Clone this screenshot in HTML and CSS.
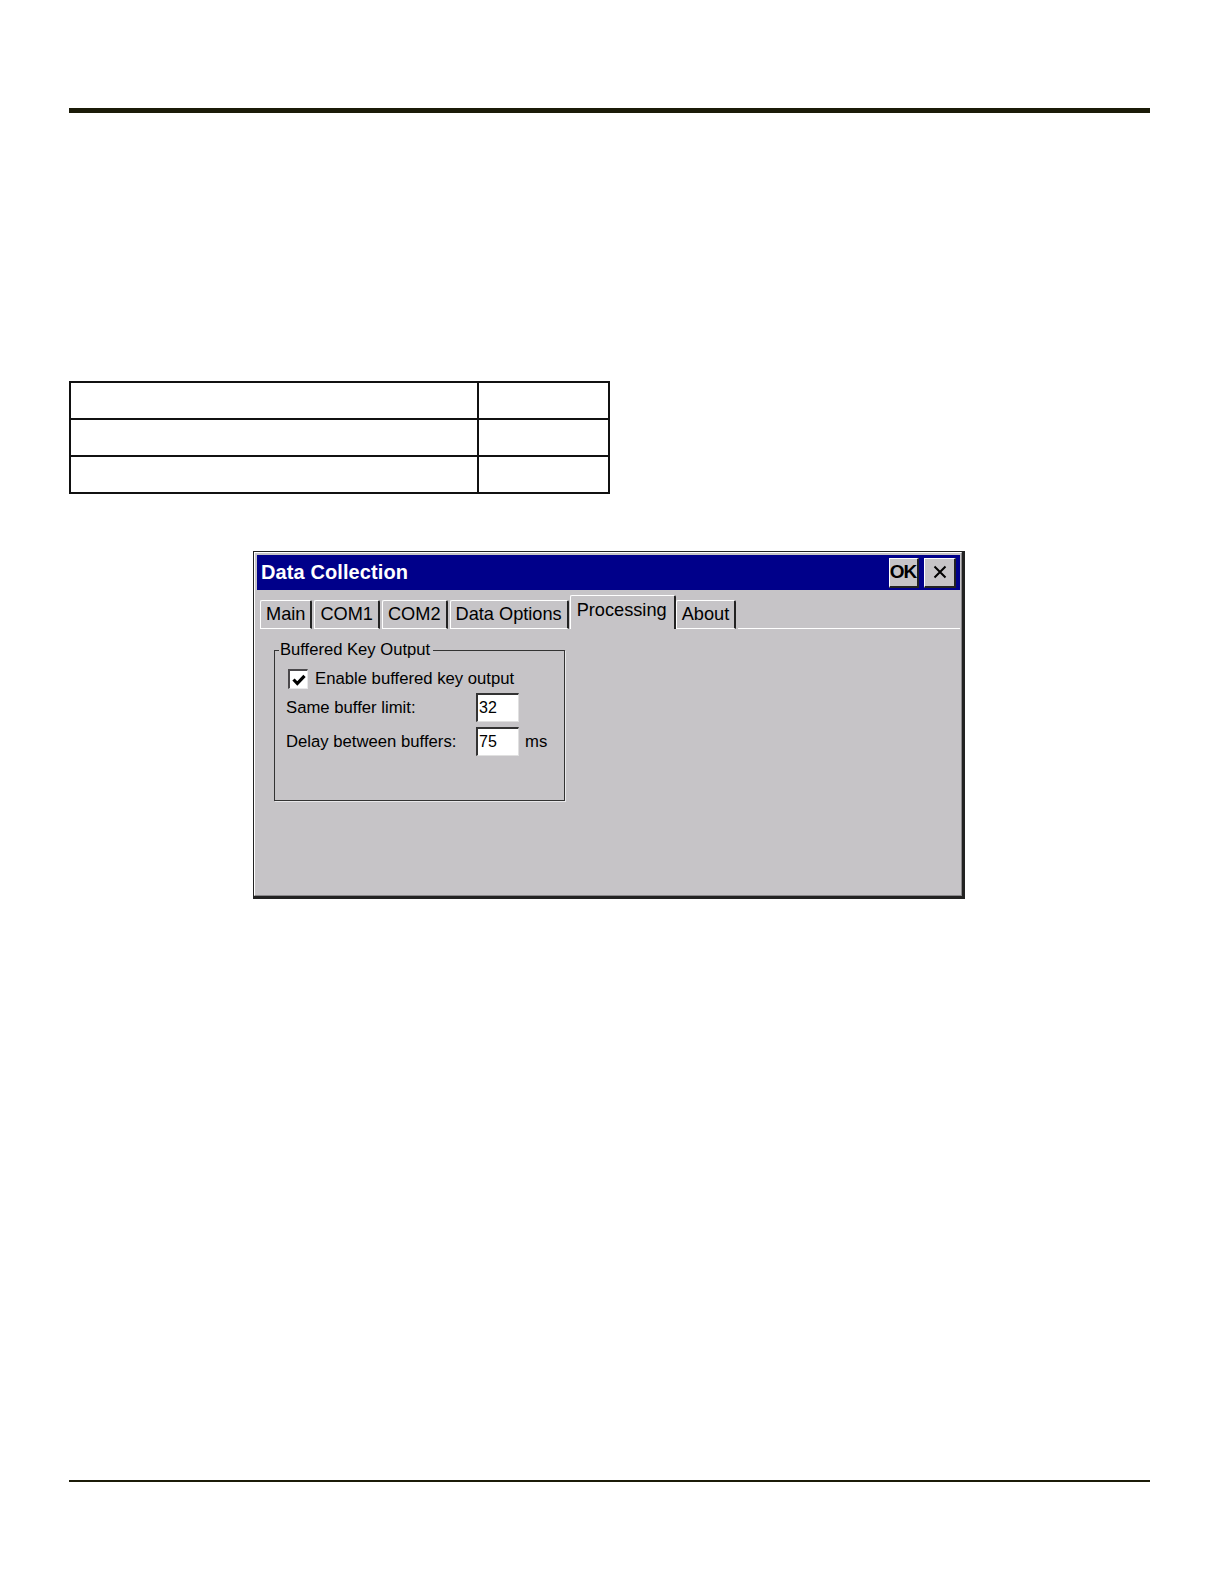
FILE: index.html
```html
<!DOCTYPE html>
<html>
<head>
<meta charset="utf-8">
<title>Data Collection - Processing</title>
<link rel="stylesheet" href="styles.css">
</head>
<body>
<div class="page">
  <div class="top-rule"></div>

  <table class="blank-table">
    <tr><td class="c1"></td><td class="c2"></td></tr>
    <tr><td class="c1"></td><td class="c2"></td></tr>
    <tr><td class="c1"></td><td class="c2"></td></tr>
  </table>

  <div class="dialog">
    <div class="frame">
      <div class="titlebar">
        <span class="title">Data Collection</span>
        <div class="title-buttons">
          <div class="tbtn ok">OK</div>
          <div class="tbtn close">
            <svg width="16" height="16" viewBox="0 0 16 16"><path d="M2.5 2.5 L13.5 13.5 M13.5 2.5 L2.5 13.5" stroke="#000" stroke-width="2" fill="none"/></svg>
          </div>
        </div>
      </div>

      <div class="tabstrip">
        <div class="tab">Main</div>
        <div class="tab">COM1</div>
        <div class="tab">COM2</div>
        <div class="tab">Data Options</div>
        <div class="tab active">Processing</div>
        <div class="tab">About</div>
        <div class="tab-fill"></div>
      </div>

      <div class="panel">
        <fieldset class="group">
          <legend>Buffered Key Output</legend>
          <div class="row check-row">
            <span class="checkbox">
              <svg width="16" height="16" viewBox="0 0 16 16"><path d="M2.5 7.5 L6.3 11.5 L13.5 3.8" stroke="#000" stroke-width="3.2" fill="none"/></svg>
            </span>
            <span class="check-label">Enable buffered key output</span>
          </div>
          <div class="row field-row">
            <span class="label">Same buffer limit:</span>
            <span class="input">32</span>
          </div>
          <div class="row field-row second">
            <span class="label">Delay between buffers:</span>
            <span class="input">75</span>
            <span class="unit">ms</span>
          </div>
        </fieldset>
      </div>
    </div>
  </div>

  <div class="bottom-rule"></div>
</div>
</body>
</html>
```

FILE: styles.css
```css
html, body {
  margin: 0;
  padding: 0;
  background: #ffffff;
}

.page {
  display: flex;
  flex-direction: column;
  align-items: flex-start;
  font-family: "Liberation Sans", Arial, sans-serif;
}

.top-rule {
  margin: 108px 0 0 69px;
  width: 1081px;
  height: 5px;
  background: #1b1b08;
}

.blank-table {
  margin: 268px 0 0 69px;
  width: 541px;
  height: 113px;
  border-collapse: collapse;
  border: 2px solid #111;
}

.blank-table td {
  border: 2px solid #111;
  height: 34px;
  padding: 0;
}

.blank-table .c1 { width: 408px; }
.blank-table .c2 { width: 129px; }

.dialog {
  margin: 57px 0 0 253px;
  width: 712px;
  height: 348px;
  box-sizing: border-box;
  border: 1px solid #222;
  border-right-width: 3px;
  border-bottom-width: 3px;
  background: #c6c4c7;
}

.frame {
  height: 100%;
  box-sizing: border-box;
  border-top: 1px solid #ffffff;
  border-left: 1px solid #ffffff;
  border-right: 1px solid #8a888b;
  border-bottom: 1px solid #8a888b;
  padding: 2px 1px 0 2px;
  display: flex;
  flex-direction: column;
}

.titlebar {
  height: 35px;
  background: #00008a;
  display: flex;
  align-items: center;
  justify-content: space-between;
  padding: 0 4px 0 4px;
}

.title {
  color: #ffffff;
  font-weight: bold;
  font-size: 20px;
  letter-spacing: 0.1px;
}

.title-buttons {
  display: flex;
  gap: 5px;
}

.tbtn {
  height: 30px;
  box-sizing: border-box;
  background: #c6c4c7;
  border-top: 1px solid #ffffff;
  border-left: 1px solid #ffffff;
  border-right: 2px solid #222;
  border-bottom: 2px solid #222;
  display: flex;
  align-items: center;
  justify-content: center;
}

.tbtn.ok {
  width: 30px;
  font-weight: bold;
  font-size: 19px;
  letter-spacing: -1px;
  color: #000;
  padding-right: 1px;
}

.tbtn.close {
  width: 32px;
}

.tabstrip {
  display: flex;
  align-items: flex-end;
  margin-top: 5px;
  height: 34px;
  padding-left: 3px;
}

.tab {
  height: 29px;
  box-sizing: border-box;
  padding: 0 5px 0 5px;
  font-size: 18.2px;
  color: #000;
  border-top: 1px solid #ffffff;
  border-left: 1px solid #ffffff;
  border-right: 2px solid #222;
  border-bottom: 1px solid #ffffff;
  border-top-left-radius: 2px;
  border-top-right-radius: 2px;
  display: flex;
  align-items: center;
  margin-right: 2px;
}

.tab.active {
  height: 34px;
  border-bottom: none;
  padding: 0 7px 4px 6px;
  margin-left: -1px;
  margin-right: 0;
}

.tab-fill {
  flex: 1;
  height: 1px;
  background: #ffffff;
}

.panel {
  flex: 1;
  padding: 12px 0 0 17px;
}

.group {
  margin: 0;
  width: 291px;
  height: 160px;
  box-sizing: border-box;
  border: 1px solid #333;
  box-shadow: 1px 1px 0 #e8e8ea;
  padding: 0 0 0 11px;
}

.group legend {
  font-size: 16.6px;
  padding: 0 3px 0 1px;
  margin-left: -7px;
  line-height: 18px;
  color: #000;
}

.row {
  display: flex;
  align-items: center;
  font-size: 16.7px;
  color: #000;
}

.check-row {
  margin-top: 9px;
  height: 22px;
}

.checkbox {
  width: 20px;
  height: 20px;
  box-sizing: border-box;
  margin-left: 2px;
  background: #ffffff;
  border-top: 2px solid #4a484b;
  border-left: 2px solid #4a484b;
  border-right: 1px solid #e8e8ea;
  border-bottom: 1px solid #e8e8ea;
  display: flex;
  align-items: center;
  justify-content: center;
}

.check-label {
  margin-left: 7px;
}

.field-row {
  margin-top: 3px;
  height: 29px;
}

.field-row.second {
  margin-top: 5px;
}

.label {
  width: 190px;
}

.input {
  width: 43px;
  height: 29px;
  box-sizing: border-box;
  background: #ffffff;
  border-top: 2px solid #333;
  border-left: 2px solid #333;
  border-right: 1px solid #e0e0e0;
  border-bottom: 1px solid #e0e0e0;
  padding-left: 1px;
  display: flex;
  align-items: center;
  font-size: 16px;
}

.unit {
  margin-left: 6px;
}

.bottom-rule {
  margin: 581px 0 0 69px;
  width: 1081px;
  height: 2px;
  background: #1b1b08;
}
```
